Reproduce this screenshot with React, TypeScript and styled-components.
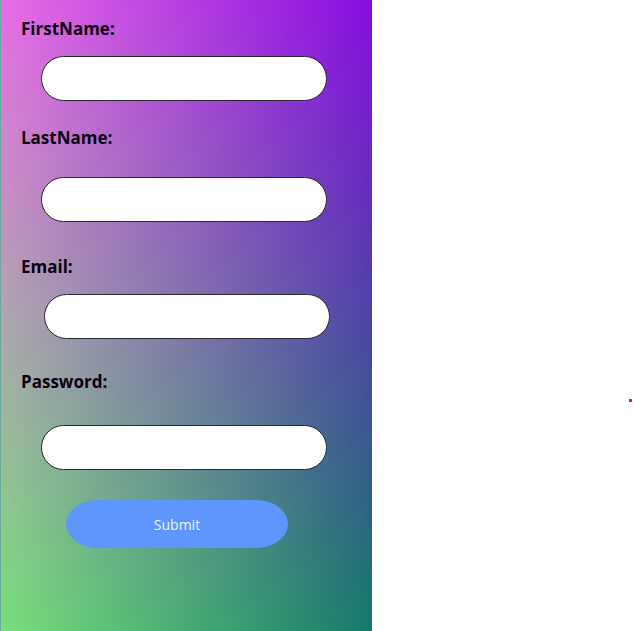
import React from "react";
import styled, { createGlobalStyle } from "styled-components";

const GlobalStyle = createGlobalStyle`
  html, body {
    margin: 0;
    padding: 0;
    background: #ffffff;
  }
  body {
    font-family: "Open Sans", "Liberation Sans", sans-serif;
  }
`;

const Page = styled.div`
  position: relative;
  width: 634px;
  height: 631px;
  overflow: hidden;
  background: #ffffff;
`;

const Panel = styled.form`
  position: relative;
  isolation: isolate;
  box-sizing: border-box;
  width: 372px;
  height: 631px;
  padding: 17px 0 0 0;
  display: flex;
  flex-direction: column;
  background: linear-gradient(to right, #79df7b, #167a6c);
  border-left: 1px solid rgba(255, 255, 255, 0.35);

  &::before {
    content: "";
    position: absolute;
    inset: 0;
    z-index: -1;
    background: linear-gradient(to right, #e86de5, #870ce0);
    -webkit-mask-image: linear-gradient(to bottom, #000, transparent);
    mask-image: linear-gradient(to bottom, #000, transparent);
  }
`;

const Label = styled.label<{ $top: number }>`
  display: block;
  margin: ${(p) => p.$top}px 0 0 20px;
  font-family: "Open Sans", "Liberation Sans", sans-serif;
  font-weight: 700;
  font-size: 17px;
  line-height: 24px;
  color: #0a0010;
`;

const Input = styled.input<{ $top: number; $left: number }>`
  display: block;
  box-sizing: border-box;
  width: 286px;
  height: 45px;
  margin: ${(p) => p.$top}px 0 0 ${(p) => p.$left}px;
  padding: 0 20px;
  border: 1px solid #2a2a35;
  border-radius: 23px;
  background: #ffffff;
  font-family: "Open Sans", sans-serif;
  font-size: 14px;
  outline: none;
`;

const SubmitButton = styled.button`
  display: block;
  box-sizing: border-box;
  width: 222px;
  height: 48px;
  margin: 30px 0 0 65px;
  border: none;
  border-radius: 32px / 24px;
  background: #5e96fe;
  color: #eef2ff;
  font-family: "Open Sans", sans-serif;
  font-size: 14px;
  cursor: pointer;
`;

const Dot = styled.span`
  position: absolute;
  left: 629px;
  top: 399px;
  width: 3px;
  height: 3px;
  background: #f01c1c;
`;

const fields = [
  { id: "firstName", label: "FirstName:", type: "text", labelTop: 0, inputTop: 15, left: 40 },
  { id: "lastName", label: "LastName:", type: "text", labelTop: 25, inputTop: 27, left: 40 },
  { id: "email", label: "Email:", type: "email", labelTop: 33, inputTop: 15, left: 43 },
  { id: "password", label: "Password:", type: "password", labelTop: 31, inputTop: 31, left: 40 },
];

export default function App() {
  return (
    <>
      <GlobalStyle />
      <Page>
        <Panel onSubmit={(e) => e.preventDefault()}>
          {fields.map((f) => (
            <React.Fragment key={f.id}>
              <Label htmlFor={f.id} $top={f.labelTop}>
                {f.label}
              </Label>
              <Input id={f.id} type={f.type} $top={f.inputTop} $left={f.left} />
            </React.Fragment>
          ))}
          <SubmitButton type="submit">Submit</SubmitButton>
        </Panel>
        <Dot />
      </Page>
    </>
  );
}
